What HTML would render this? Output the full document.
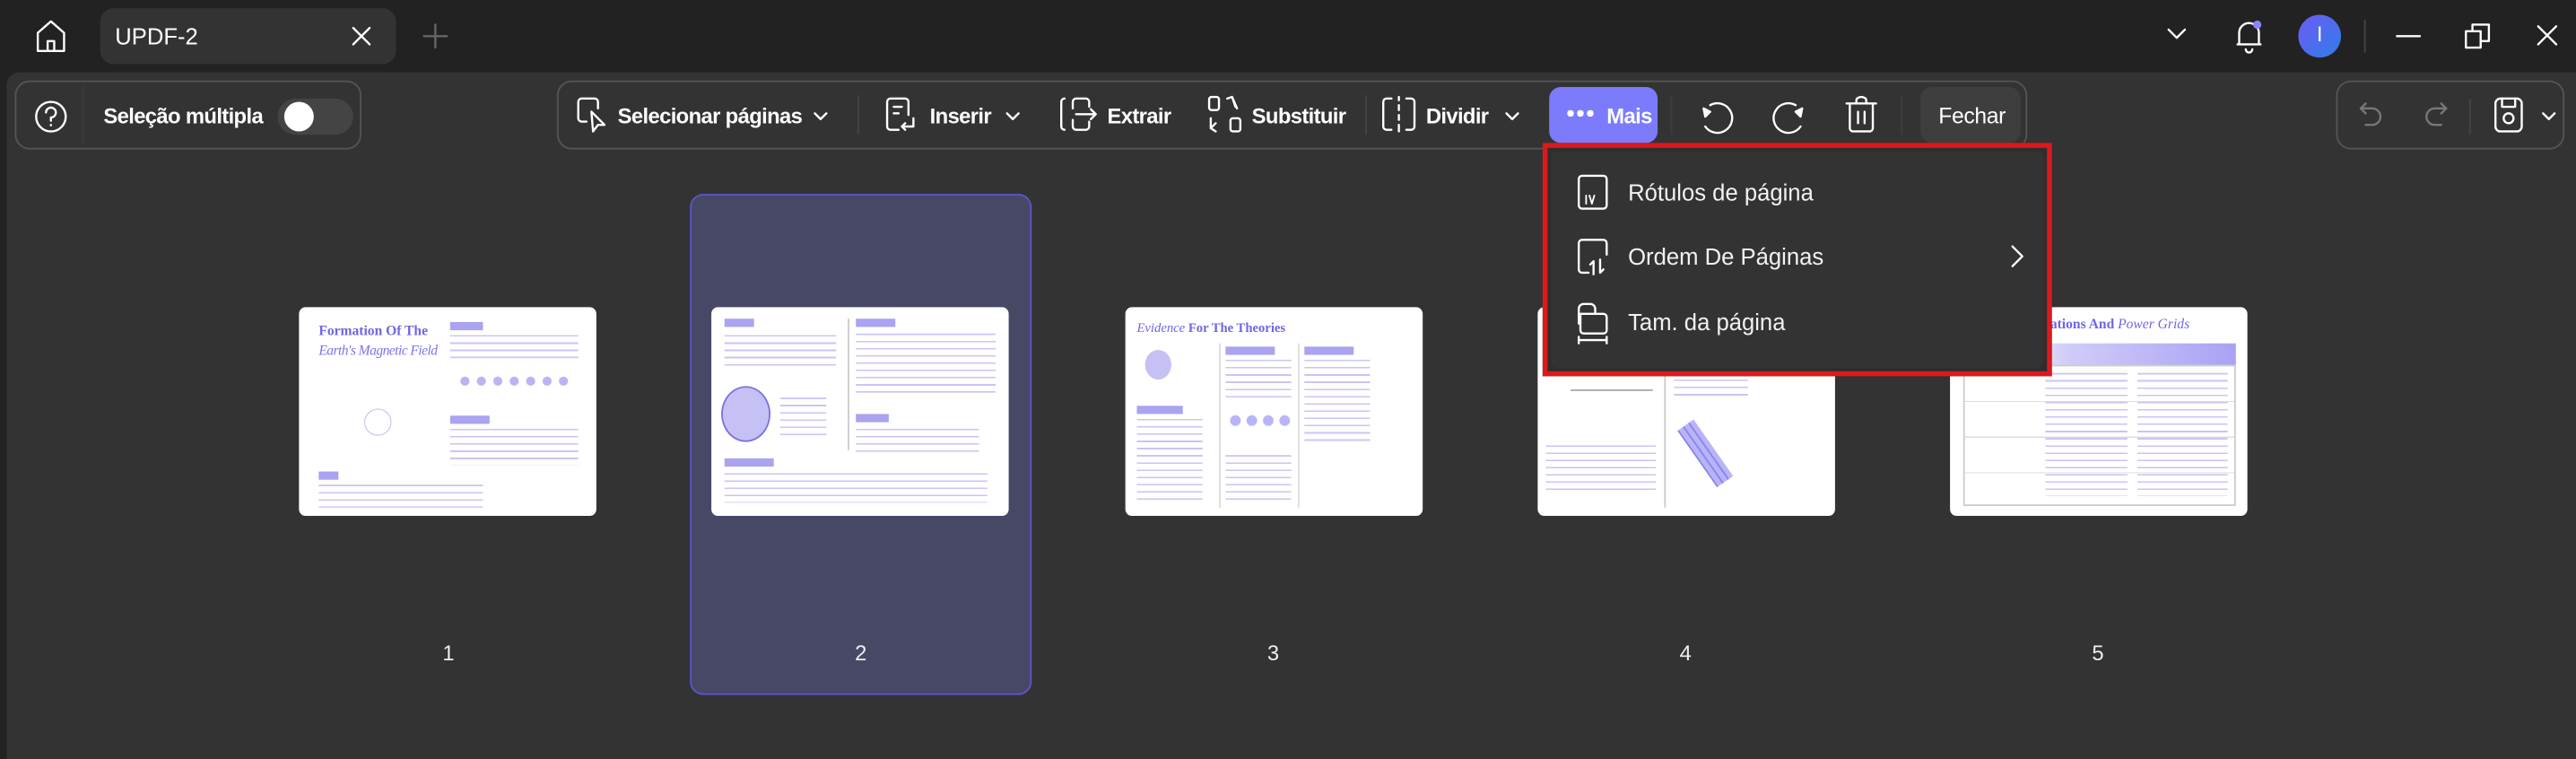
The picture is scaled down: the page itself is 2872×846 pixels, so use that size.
<!DOCTYPE html>
<html><head><meta charset="utf-8"><style>
*{box-sizing:border-box;margin:0;padding:0}
html,body{width:2872px;height:846px;overflow:hidden;background:#222}
#w{position:absolute;left:0;top:0;width:1568px;height:462px;transform:scale(1.8316,1.8312);transform-origin:0 0;font-family:"Liberation Sans",sans-serif;color:#fff;background:#222}
.a{position:absolute}
.main{left:4px;top:44px;width:1564px;height:418px;background:#333;border-top-left-radius:8px}
.grp{border:1px solid #555;border-radius:9px;background:#333}
.t{font-size:13px;font-weight:bold;white-space:nowrap;top:63px;letter-spacing:-0.35px}
svg{position:absolute;overflow:visible}
svg *{fill:none;stroke:#fff;stroke-width:1.3;stroke-linecap:round;stroke-linejoin:round}
.pg{background:#fff;border-radius:4px;width:181px;height:127px;top:187px;overflow:hidden}
.tl{position:absolute;background:repeating-linear-gradient(#c9c5f3 0 0.9px,transparent 0.9px 4.4px)}
.hd{position:absolute;background:#a9a3f0;height:5px}
.num{top:390px;font-size:13px;width:40px;text-align:center;color:#eee}
.mi{left:991px;font-size:14px;color:#f2f2f2}
</style></head><body><div id="w">
<svg style="left:20px;top:11px" width="22" height="22" viewBox="0 0 22 22"><path d="M3 9 L11 2 L19 9 V20 H3 Z M9 20 V14 H13 V20"/></svg>
<div class="a" style="left:61px;top:5px;width:180px;height:34px;background:#333;border-radius:8px"></div>
<div class="a" style="left:70px;top:14px;font-size:14px">UPDF-2</div>
<svg style="left:214px;top:16px" width="12" height="12"><path d="M1 1 L11 11 M11 1 L1 11"/></svg>
<svg style="left:258px;top:15px" width="14" height="14"><path style="stroke:#666" d="M7 0 V14 M0 7 H14"/></svg>
<svg style="left:1319px;top:17px" width="12" height="8"><path d="M1 1 L6 6 L11 1"/></svg>
<svg style="left:1360px;top:11px" width="18" height="22"><path d="M3 16 V9 A6 6 0 0 1 15 9 V16 H2 H16 M7 19 A2 2 0 0 0 11 19"/><circle cx="14" cy="4" r="2.5" style="fill:#8a85ff;stroke:none"/></svg>
<div class="a" style="left:1399px;top:9px;width:26px;height:26px;border-radius:50%;background:linear-gradient(135deg,#6d5cf5,#2f7de8)"></div>
<div class="a" style="left:1400px;top:13px;width:24px;text-align:center;font-size:13px">I</div>
<div class="a" style="left:1439px;top:12px;width:1px;height:20px;background:#444"></div>
<svg style="left:1459px;top:21px" width="14" height="2"><path d="M0 1 H14"/></svg>
<svg style="left:1500px;top:14px" width="16" height="16"><path d="M1 5 H10 V15 H1 Z M5 5 V1 H15 V11 H10"/></svg>
<svg style="left:1544px;top:15px" width="13" height="13"><path d="M1 1 L12 12 M12 1 L1 12"/></svg>
<div class="a main"></div>
<div class="a grp" style="left:9px;top:49px;width:211px;height:42px"></div>
<svg style="left:21px;top:61px" width="20" height="20"><circle cx="10" cy="10" r="9"/><path d="M7 7.5 A3 3 0 1 1 10 10.5 V12.5 M10 15 V15.3"/></svg>
<div class="a" style="left:50px;top:52px;width:1px;height:36px;background:#3b3b3b"></div>
<div class="a t" style="left:63px;top:63px">Seleção múltipla</div>
<div class="a" style="left:169px;top:60px;width:46px;height:22px;border-radius:11px;background:#444"></div>
<div class="a" style="left:173px;top:62px;width:18px;height:18px;border-radius:50%;background:#fff"></div>

<div class="a grp" style="left:339px;top:49px;width:895px;height:42px"></div>
<svg style="left:351px;top:59px" width="22" height="24"><path d="M6 15 H3 A2 2 0 0 1 1 13 V3 A2 2 0 0 1 3 1 H11 A2 2 0 0 1 13 3 V7 M9 9 L10 21 L13 17 L17 17 Z"/></svg>
<div class="a t" style="left:376px">Selecionar páginas</div>
<svg style="left:495px;top:68px" width="9" height="6"><path d="M1 1 L4.5 4.5 L8 1"/></svg>
<div class="a" style="left:522px;top:58px;width:1px;height:24px;background:#444"></div>
<svg style="left:539px;top:59px" width="22" height="24"><path d="M8 20 H3 A2 2 0 0 1 1 18 V3 A2 2 0 0 1 3 1 H12 A2 2 0 0 1 14 3 V11 M5 6 H10 M5 10 H8 M17 13 V18 H10 M12 16 L10 18 L12 20"/></svg>
<div class="a t" style="left:566px">Inserir</div>
<svg style="left:612px;top:68px" width="9" height="6"><path d="M1 1 L4.5 4.5 L8 1"/></svg>
<svg style="left:645px;top:59px" width="24" height="22"><path d="M3 1 A2 2 0 0 0 1 3 V18 A2 2 0 0 0 3 20 M8 7 V3 A2 2 0 0 1 10 1 H16 A2 2 0 0 1 18 3 V6 M18 15 V18 A2 2 0 0 1 16 20 H10 A2 2 0 0 1 8 18 V14 M10 10.5 H22 M19 7.5 L22 10.5 L19 13.5"/></svg>
<div class="a t" style="left:674px">Extrair</div>
<svg style="left:735px;top:58px" width="22" height="24"><rect x="1" y="1" width="6" height="8" rx="1.5"/><rect x="14" y="14" width="6" height="8" rx="1.5"/><path d="M12 2 L15 1 L17 7 M15 1 L18 8 M2 14 V20 L5 22 M2 20 L5 17"/></svg>
<div class="a t" style="left:762px">Substituir</div>
<div class="a" style="left:831px;top:58px;width:1px;height:24px;background:#444"></div>
<svg style="left:841px;top:59px" width="22" height="22"><path d="M6 1 H3 A2 2 0 0 0 1 3 V18 A2 2 0 0 0 3 20 H6 M15 1 H18 A2 2 0 0 1 20 3 V18 A2 2 0 0 1 18 20 H15 M10.5 0 V2 M10.5 5 V8 M10.5 11 V14 M10.5 17 V21"/></svg>
<div class="a t" style="left:868px">Dividir</div>
<svg style="left:916px;top:68px" width="9" height="6"><path d="M1 1 L4.5 4.5 L8 1"/></svg>
<div class="a" style="left:943px;top:53px;width:66px;height:34px;border-radius:7px;background:#7b7bfb"></div>
<div class="a" style="left:954px;top:67px;width:3.5px;height:3.5px;border-radius:50%;background:#fff;box-shadow:6px 0 #fff,12px 0 #fff"></div>
<div class="a t" style="left:978px">Mais</div>
<div class="a" style="left:1017px;top:58px;width:1px;height:24px;background:#3d3d3d"></div>
<svg style="left:1034px;top:60px" width="22" height="22"><path d="M7 4 A9 9 0 1 1 4 17"/><path d="M3 6 L4 11 L7 8 Z" style="fill:#fff"/></svg>
<svg style="left:1078px;top:60px" width="22" height="22"><path d="M15 4 A9 9 0 1 0 18 17"/><path d="M19 6 L18 11 L15 8 Z" style="fill:#fff"/></svg>
<svg style="left:1123px;top:58px" width="20" height="24"><path d="M1 5 H19 M3 5 V20 A2 2 0 0 0 5 22 H15 A2 2 0 0 0 17 20 V5 M7 5 V3 A3 2 0 0 1 13 3 V5 M8 10 V17 M12 10 V17"/></svg>
<div class="a" style="left:1157px;top:58px;width:1px;height:24px;background:#3d3d3d"></div>
<div class="a" style="left:1169px;top:53px;width:61px;height:34px;border-radius:7px;background:#3e3e3e"></div>
<div class="a" style="left:1180px;top:63px;font-size:13.5px;letter-spacing:-0.2px">Fechar</div>

<div class="a grp" style="left:1422px;top:49px;width:139px;height:42px"></div>
<svg style="left:1436px;top:62px" width="14" height="16"><path style="stroke:#777" d="M4 1 L1 4 L4 7 M1 4 H8 A5 5 0 0 1 8 14 H4"/></svg>
<svg style="left:1476px;top:62px" width="14" height="16"><path style="stroke:#777" d="M10 1 L13 4 L10 7 M13 4 H6 A5 5 0 0 0 6 14 H10"/></svg>
<div class="a" style="left:1503px;top:60px;width:1px;height:22px;background:#444"></div>
<svg style="left:1518px;top:59px" width="18" height="22"><rect x="1" y="1" width="16" height="20" rx="3"/><path d="M5 1 V6 H13 V1"/><circle cx="9" cy="13" r="3"/></svg>
<svg style="left:1547px;top:68px" width="9" height="6"><path d="M1 1 L4.5 4.5 L8 1"/></svg>

<div class="a" style="left:420px;top:118px;width:208px;height:305px;background:#474766;border:1.5px solid #5c56cc;border-radius:8px"></div>

<div class="a pg" style="left:182px">
 <div class="a" style="left:12px;top:9px;font-family:'Liberation Serif',serif;font-weight:bold;font-size:8.5px;color:#6f66e3">Formation Of The</div>
 <div class="a" style="left:12px;top:21px;font-family:'Liberation Serif',serif;font-style:italic;font-size:8.5px;color:#7c74e8;letter-spacing:-0.3px">Earth's Magnetic Field</div>
 <svg style="left:8px;top:42px" width="80" height="55"><g style="stroke:#d8d6f0;stroke-width:.5"><ellipse cx="40" cy="28" rx="38" ry="25"/><ellipse cx="40" cy="28" rx="30" ry="21"/><ellipse cx="40" cy="28" rx="22" ry="17"/><ellipse cx="40" cy="28" rx="14" ry="12"/></g><circle cx="40" cy="28" r="8" style="stroke:#b8b3ee;stroke-width:.5"/></svg>
 <div class="hd" style="left:92px;top:9px;width:20px"></div><div class="tl" style="left:92px;top:17px;width:78px;height:14px"></div>
 <div class="a" style="left:96px;top:41px;width:70px;height:8px;background:radial-gradient(circle,#b9b4f4 2.5px,transparent 3px) 0 0/10px 8px"></div>
 <div class="hd" style="left:92px;top:66px;width:24px"></div><div class="tl" style="left:92px;top:74px;width:78px;height:22px"></div>
 <div class="hd" style="left:12px;top:100px;width:12px"></div><div class="tl" style="left:12px;top:108px;width:100px;height:14px"></div>
</div>
<div class="a pg" style="left:433px">
 <div class="hd" style="left:8px;top:7px;width:18px"></div><div class="tl" style="left:8px;top:17px;width:68px;height:22px"></div>
 <div class="a" style="left:6px;top:48px;width:30px;height:34px;border-radius:50%;background:#c5c1f5;border:0.8px solid #7a72e0"></div>
 <div class="tl" style="left:42px;top:55px;width:28px;height:25px"></div>
 <div class="a" style="left:83px;top:7px;width:0.7px;height:80px;background:#ccc"></div>
 <div class="hd" style="left:88px;top:7px;width:24px"></div><div class="tl" style="left:88px;top:16px;width:85px;height:36px"></div>
 <div class="hd" style="left:88px;top:65px;width:20px"></div><div class="tl" style="left:88px;top:74px;width:75px;height:14px"></div>
 <div class="hd" style="left:8px;top:92px;width:30px"></div><div class="tl" style="left:8px;top:101px;width:160px;height:18px"></div>
</div>
<div class="a pg" style="left:685px">
 <div class="a" style="left:7px;top:8px;font-family:'Liberation Serif',serif;font-size:8px;color:#6f66e3"><i>Evidence</i> <b>For The Theories</b></div>
 <div class="a" style="left:12px;top:26px;width:16px;height:18px;border-radius:50%;background:#c5c1f5"></div>
 <div class="hd" style="left:7px;top:60px;width:28px"></div><div class="tl" style="left:7px;top:68px;width:40px;height:50px"></div>
 <div class="a" style="left:57px;top:22px;width:.7px;height:100px;background:#ddd"></div>
 <div class="hd" style="left:61px;top:24px;width:30px"></div><div class="tl" style="left:61px;top:32px;width:40px;height:26px"></div>
 <div class="a" style="left:62px;top:64px;width:40px;height:10px;background:radial-gradient(circle,#b9b4f4 3px,transparent 3.5px) 0 0/10px 10px"></div>
 <div class="tl" style="left:61px;top:90px;width:40px;height:28px"></div>
 <div class="a" style="left:105px;top:22px;width:.7px;height:100px;background:#ddd"></div>
 <div class="hd" style="left:109px;top:24px;width:30px"></div><div class="tl" style="left:109px;top:32px;width:40px;height:50px"></div>
</div>
<div class="a pg" style="left:936px">
 <div class="tl" style="left:83px;top:44px;width:45px;height:10px"></div>
 <div class="a" style="left:77px;top:40px;width:.7px;height:82px;background:#ccc"></div>
 <div class="a" style="left:20px;top:50px;width:50px;height:30px;border-top:0.7px solid #aaa"></div>
 <div class="tl" style="left:5px;top:84px;width:67px;height:30px"></div>
 <div class="a" style="left:96px;top:68px;width:12px;height:42px;background:repeating-linear-gradient(90deg,#8a84f0 0 1px,#b9b4f8 1px 4px);transform:rotate(-35deg)"></div>
</div>
<div class="a pg" style="left:1187px">
 <div class="a" style="left:8px;top:22px;width:166px;height:13px;background:linear-gradient(90deg,#fff 0,#cfcbf8 40%,#a9a2f5 100%)"></div>
 <div class="a" style="left:8px;top:35px;width:166px;height:86px;border:0.7px solid #ccc;background:repeating-linear-gradient(#fff 0 21px,#ddd 21px 21.7px)"></div>
 <div class="tl" style="left:58px;top:40px;width:50px;height:75px"></div>
 <div class="tl" style="left:114px;top:40px;width:55px;height:75px"></div>
</div>
<div class="a num" style="left:253px">1</div>
<div class="a num" style="left:504px">2</div>
<div class="a num" style="left:755px">3</div>
<div class="a num" style="left:1006px">4</div>
<div class="a num" style="left:1257px">5</div>
<div class="a" style="left:1248px;top:192px;font-family:'Liberation Serif',serif;font-size:8.5px;color:#6f66e3;width:120px;white-space:nowrap;overflow:hidden"><b>ations And</b> <i>Power Grids</i></div>

<div class="a" style="left:939px;top:87px;width:310px;height:142px;border:3.5px solid #db1a1e;background:#2e2e2e"></div>
<div class="a" style="left:944px;top:92px;width:300px;height:132px;background:#333;border-radius:4px"></div>
<svg style="left:960px;top:106px" width="20" height="22"><rect x="1" y="1" width="17" height="20" rx="2"/><path style="stroke-width:1" d="M5.5 13 V18 M7.5 13 L9 18 L10.5 13"/></svg>
<div class="a mi" style="top:109px">Rótulos de página</div>
<svg style="left:960px;top:145px" width="22" height="24"><path d="M7 21 H3 A2 2 0 0 1 1 19 V3 A2 2 0 0 1 3 1 H16 A2 2 0 0 1 18 3 V10 M10 22 V14 M8 16 L10 14 M14 13 V21 L16 19"/></svg>
<div class="a mi" style="top:148px">Ordem De Páginas</div>
<svg style="left:1224px;top:149px" width="8" height="14"><path d="M1 1 L7 7 L1 13"/></svg>
<svg style="left:960px;top:184px" width="20" height="26"><path d="M1 13 V4 A3 3 0 0 1 4 1 H8 A3 3 0 0 1 11 4 V7 M2 7 H16 A2 2 0 0 1 18 9 V17 A2 2 0 0 1 16 19 H4 A2 2 0 0 1 2 17 Z M1 23 H18 M1 21 V25 M18 21 V25"/></svg>
<div class="a mi" style="top:188px">Tam. da página</div>
</div></body></html>
